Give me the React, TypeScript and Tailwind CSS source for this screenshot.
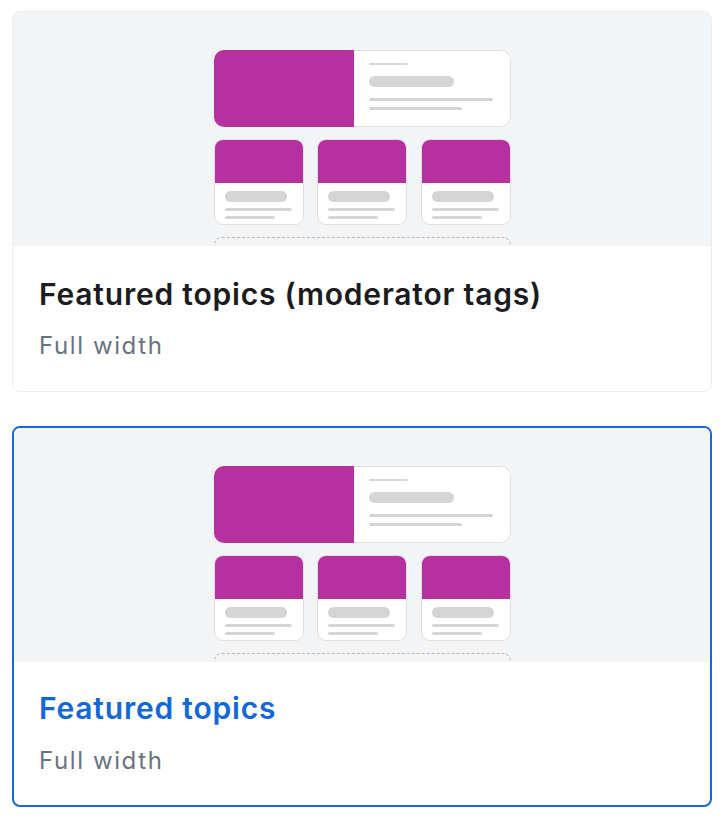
import React from "react";

const PURPLE = "bg-[#b6309f]";

function SmallCard() {
  return (
    <div className="flex h-[86px] w-[90px] shrink-0 flex-col overflow-hidden rounded-[9px] border border-[#dedede] bg-white">
      <div className={`h-[43px] shrink-0 ${PURPLE}`} />
      <div className="flex flex-col px-[10px] pt-[8px]">
        <div className="h-[11px] w-[62px] rounded-full bg-[#d5d5d5]" />
        <div className="mt-[6px] h-[3px] w-[67px] rounded-full bg-[#d5d5d5]" />
        <div className="mt-[5px] h-[3px] w-[50px] rounded-full bg-[#d5d5d5]" />
      </div>
    </div>
  );
}

function Illustration() {
  return (
    <div className="flex h-[234px] items-start justify-center overflow-hidden bg-[#f3f4f6] pt-[38px]">
      <div className="flex w-[297px] shrink-0 flex-col gap-[12px]">
        <div className="flex h-[77px] shrink-0 overflow-hidden rounded-[10px] bg-white">
          <div className={`w-[140px] ${PURPLE}`} />
          <div className="flex flex-1 flex-col rounded-r-[10px] border border-l-0 border-[#dedede] pl-[15px] pt-[12px]">
            <div className="h-[2px] w-[39px] rounded-full bg-[#d8d8d8]" />
            <div className="mt-[11px] h-[11px] w-[85px] rounded-full bg-[#d5d5d5]" />
            <div className="mt-[11px] h-[3px] w-[124px] rounded-full bg-[#d5d5d5]" />
            <div className="mt-[6px] h-[3px] w-[93px] rounded-full bg-[#d5d5d5]" />
          </div>
        </div>
        <div className="flex shrink-0 justify-between">
          <SmallCard />
          <SmallCard />
          <SmallCard />
        </div>
        <div className="h-[40px] shrink-0 rounded-[8px] border border-dashed border-[#b8b8b8]" />
      </div>
    </div>
  );
}

function LayoutCard({ title, selected }: { title: string; selected?: boolean }) {
  return (
    <div
      className={
        selected
          ? "overflow-hidden rounded-[8px] border-2 border-[#1769d4] bg-white"
          : "overflow-hidden rounded-[8px] border border-[#ebedef] bg-white"
      }
    >
      <Illustration />
      <div className={selected ? "px-[25px] pt-[28px] pb-[28px]" : "px-[26px] pt-[30px] pb-[29px]"}>
        <div
          className={`text-[30px] font-semibold leading-[36px] tracking-[0.8px] ${
            selected ? "text-[#1268d9]" : "text-[#1c1c1e]"
          }`}
        >
          {title}
        </div>
        <div
          className={`${selected ? "mt-[19px]" : "mt-[18px]"} text-[24px] leading-[32px] tracking-[1.6px] text-[#687382]`}
        >
          Full width
        </div>
      </div>
    </div>
  );
}

export default function App() {
  return (
    <div
      className="flex min-h-[818px] w-[724px] flex-col gap-[34px] bg-white px-[12px] pt-[11px]"
      style={{ fontFamily: "Inter, 'Noto Sans', sans-serif" }}
    >
      <LayoutCard title="Featured topics (moderator tags)" />
      <LayoutCard title="Featured topics" selected />
    </div>
  );
}
